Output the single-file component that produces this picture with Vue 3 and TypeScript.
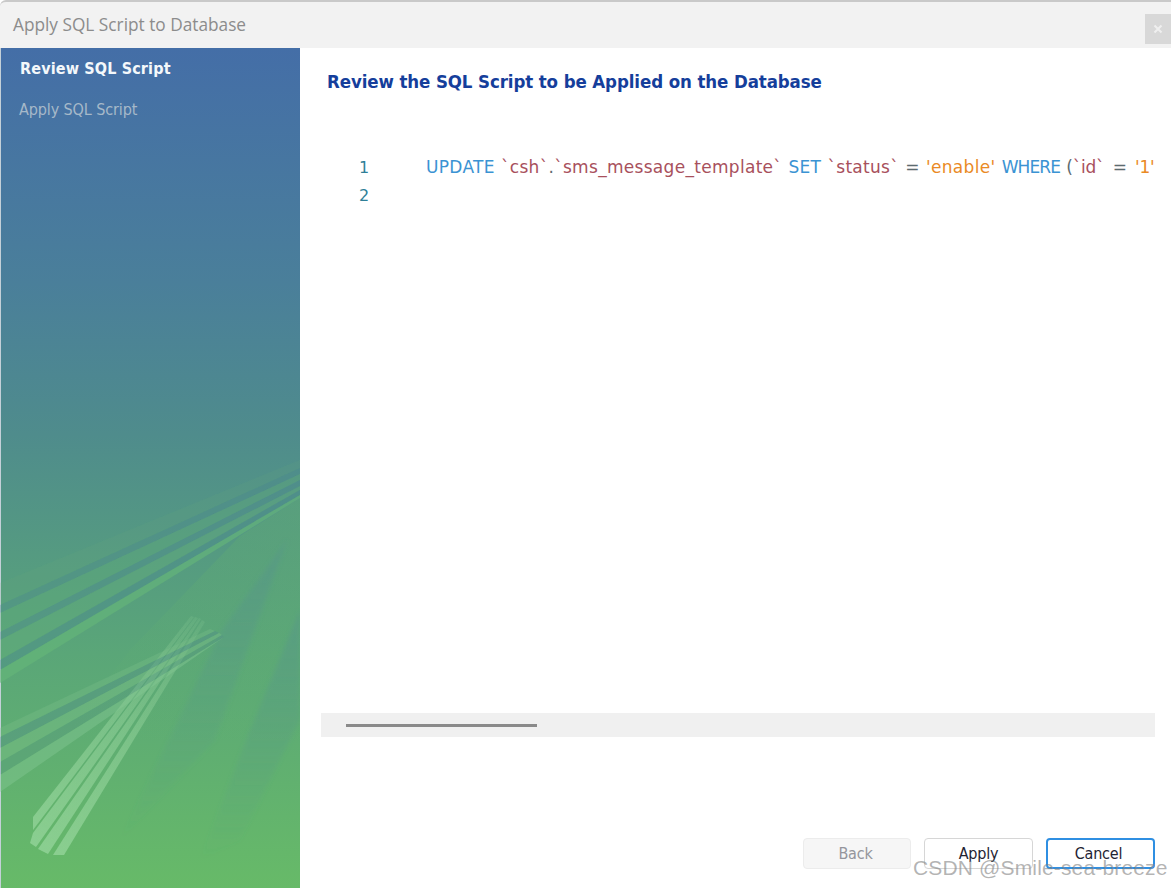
<script setup lang="ts">
const steps = [
  { label: 'Review SQL Script', active: true },
  { label: 'Apply SQL Script', active: false },
]

// Alternating bands of the upper streak: [right top, right bottom, left top, left bottom, colour, opacity]
const bands: [number, number, number, number, string, number][] = [
  [20, 28, 143, 165, '#62ac78', 0.14],
  [28, 34, 165, 173, '#4c8a8e', 0.38],
  [34, 40, 173, 192, '#62ae78', 0.34],
  [40, 46, 192, 200, '#4c8a8e', 0.42],
  [46, 50, 200, 220, '#62ae78', 0.38],
  [50, 55, 220, 230, '#4c8a8e', 0.45],
  [55, 58, 230, 243, '#66b878', 0.6],
]
const bandPoints = (b: [number, number, number, number, string, number]) =>
  `300,${b[0]} 300,${b[1]} 0,${b[3]} 0,${b[2]}`

// Light stripes of the rising bundle, from their thin top to their wide foot
const stripes = [
  '191,176 194,177 33,390 33,377',
  '195,177 198,178 36,407 30,403 33,393',
  '199,178 201,179 48,414 38,409',
  '202,180 205,182 64,415 53,415',
]
</script>

<template>
  <div class="dialog">
    <header class="titlebar">
      <span class="title">Apply SQL Script to Database</span>
      <button class="close" type="button" aria-label="Close">
        <svg width="10" height="10" viewBox="0 0 10 10"><path d="M1.5 1.5l7 7M8.5 1.5l-7 7" stroke="#efefef" stroke-width="2" /></svg>
      </button>
    </header>
    <div class="body">
      <aside class="sidebar">
        <svg class="art" width="300" height="448" viewBox="0 0 300 448">
          <defs>
            <linearGradient id="glow" gradientUnits="userSpaceOnUse" x1="45" y1="410" x2="195" y2="178">
              <stop offset="0" stop-color="#9ad8a0" stop-opacity=".7" />
              <stop offset=".55" stop-color="#9ad8a0" stop-opacity=".45" />
              <stop offset="1" stop-color="#9ad8a0" stop-opacity=".14" />
            </linearGradient>
            <linearGradient id="ray" x1="0" y1="0" x2="0" y2="1">
              <stop offset="0" stop-color="#56958a" stop-opacity=".5" />
              <stop offset="1" stop-color="#56958a" stop-opacity="0" />
            </linearGradient>
            <linearGradient id="ground" x1="1" y1="0" x2="0" y2="1">
              <stop offset="0" stop-color="#62b070" stop-opacity=".4" />
              <stop offset="1" stop-color="#62b070" stop-opacity="0" />
            </linearGradient>
            <filter id="soft"><feGaussianBlur stdDeviation=".7" /></filter>
            <filter id="softer"><feGaussianBlur stdDeviation="2" /></filter>
          </defs>
          <polygon points="300,58 240,96 130,210 60,300 300,300" fill="url(#ground)" />
          <polygon points="287,100 222,190 120,400 215,300" fill="url(#ray)" filter="url(#softer)" />
          <polygon points="300,170 250,290 200,420 240,400 300,280" fill="url(#ray)" filter="url(#softer)" />
          <g filter="url(#soft)">
            <polygon v-for="(b, i) in bands" :key="i" :points="bandPoints(b)" :fill="b[4]" :opacity="b[5]" />
            <!-- rising bundle -->
            <polygon v-for="(s, i) in stripes" :key="i" :points="s" fill="url(#glow)" />
            <!-- lower crossing bundle -->
            <polygon points="210,189 0,288 0,297 215,191" fill="#7fc08c" opacity=".3" />
            <polygon points="215,191 0,297 0,308 219,193" fill="#4f8c8c" opacity=".38" />
            <polygon points="219,193 0,308 0,322 222,195" fill="#7fc08c" opacity=".38" />
            <polygon points="222,195 0,322 0,335 224,197" fill="#4f8c8c" opacity=".24" />
            <polygon points="224,197 0,335 0,352 224,197" fill="#85c894" opacity=".42" />
          </g>
        </svg>
        <ul class="steps">
          <li v-for="step in steps" :key="step.label" :class="['step', { active: step.active }]">{{ step.label }}</li>
        </ul>
      </aside>
      <main class="content">
        <h1 class="heading">Review the SQL Script to be Applied on the Database</h1>
        <div class="editor">
          <div class="lines">
            <div class="row">
              <span class="num">1</span>
              <code class="code"><span class="kw">UPDATE</span> <span class="id">`csh`</span><span class="op">.</span><span class="id">`sms_message_template`</span> <span class="kw">SET</span> <span class="id">`status`</span> <span class="op">=</span> <span class="str">'enable'</span> <span class="kw where">WHERE</span> <span class="tail"><span class="op">(</span><span class="id">`id`</span> <span class="op">=</span> <span class="str">'1'</span></span></code>
            </div>
            <div class="row"><span class="num">2</span></div>
          </div>
          <div class="scrolltrack"><div class="thumb"></div></div>
        </div>
        <footer class="actions">
          <button class="btn back" type="button" disabled>Back</button>
          <button class="btn" type="button">Apply</button>
          <button class="btn focus" type="button">Cancel</button>
        </footer>
      </main>
    </div>
    <span class="watermark">CSDN @Smile-sea-breeze</span>
  </div>
</template>

<style scoped>
.dialog {
  position: relative;
  width: 1171px;
  height: 888px;
  overflow: hidden;
  background: #fff;
  display: flex;
  flex-direction: column;
  font-family: "DejaVu Sans", sans-serif;
}
.titlebar {
  height: 46px;
  flex: none;
  display: flex;
  align-items: flex-start;
  justify-content: space-between;
  background: #f2f2f2;
  border-top: 2px solid #c9c9c9;
  border-top-left-radius: 6px;
}
.title {
  margin: 11px 0 0 13px;
  font: 17.25px/24px "Open Sans", sans-serif;
  color: #8c8c8c;
}
.close {
  width: 26px;
  height: 30px;
  margin-top: 12px;
  border: 0;
  padding: 0;
  background: #d8d8d8;
  display: flex;
  align-items: center;
  justify-content: center;
}
.body {
  flex: 1;
  display: flex;
  min-height: 0;
}
.sidebar {
  position: relative;
  width: 300px;
  flex: none;
  background: linear-gradient(180deg, #446ea7 0%, #4a7f9a 28%, #4f8c8c 46%, #5aa678 72%, #67ba68 100%);
  border-left: 1px solid #c4d0d8;
  box-sizing: border-box;
}
.art {
  position: absolute;
  left: -1px;
  bottom: 0;
}
.steps {
  position: relative;
  list-style: none;
  margin: 0;
  padding: 11px 0 0 19px;
  display: flex;
  flex-direction: column;
  gap: 21px;
}
.step {
  font-size: 16px;
  line-height: 20px;
  font-stretch: condensed;
  letter-spacing: -.11px;
  color: #a6b9c9;
  margin-left: -1px;
}
.step.active {
  font-weight: 700;
  letter-spacing: .15px;
  margin-left: 0;
  color: #f4f8fb;
}
.content {
  flex: 1;
  min-width: 0;
  display: flex;
  flex-direction: column;
  padding: 0 16px 19px 21px;
}
.heading {
  margin: 21px 0 0 6px;
  font-size: 18.5px;
  line-height: 26px;
  font-weight: 700;
  font-stretch: condensed;
  letter-spacing: -.1px;
  color: #153e9b;
}
.editor {
  flex: 1;
  display: flex;
  flex-direction: column;
}
.lines {
  flex: 1;
  padding-top: 58px;
  overflow: hidden;
}
.row {
  height: 28px;
  display: flex;
  align-items: center;
  white-space: nowrap;
  font-size: 16px;
}
.num {
  width: 105px;
  flex: none;
  padding-left: 38px;
  box-sizing: border-box;
  color: #2f7f97;
}
.code {
  font-family: "DejaVu Sans", sans-serif;
  font-size: 17px;
  letter-spacing: .3px;
  word-spacing: .5px;
}
.kw { color: #3b93d3; }
.id { color: #a8505c; }
.op { color: #5c6b70; }
.str { color: #ea8a25; }
.where { letter-spacing: -.9px; }
.tail { letter-spacing: -.2px; word-spacing: 3px; }
.scrolltrack {
  height: 24px;
  flex: none;
  background: #f0f0f0;
  display: flex;
  align-items: center;
  padding-left: 25px;
}
.thumb {
  width: 191px;
  height: 3px;
  background: #8a8a8a;
}
.actions {
  flex: none;
  margin-top: 101px;
  display: flex;
  justify-content: flex-end;
  gap: 13px;
}
.btn {
  width: 109px;
  height: 31px;
  box-sizing: border-box;
  padding: 0;
  background: #fff;
  border: 1.5px solid #d6d6d6;
  border-radius: 4px;
  font: 16px "DejaVu Sans", sans-serif;
  font-stretch: condensed;
  letter-spacing: -.2px;
  color: #1f2433;
}
.btn:disabled {
  background: #f6f6f6;
  border-color: #ececec;
  color: #94959c;
}
.btn.back {
  width: 108px;
  padding-right: 3px;
}
.btn.focus {
  border: 2px solid #2f8fe2;
  padding-right: 4px;
}
.watermark {
  position: absolute;
  left: 913px;
  top: 856px;
  font: 21px/24px "Liberation Sans", sans-serif;
  letter-spacing: .15px;
  color: rgba(130, 130, 130, .6);
  white-space: nowrap;
}
</style>
